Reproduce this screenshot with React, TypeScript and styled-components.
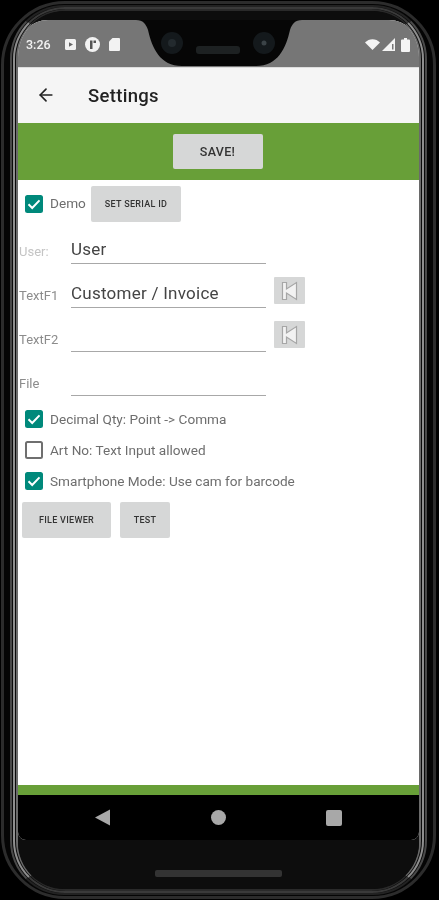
import styled, { createGlobalStyle } from "styled-components";
import { ArrowLeft } from "lucide-react";

const GlobalStyle = createGlobalStyle`
  html, body {
    margin: 0;
    padding: 0;
    height: 100%;
    overflow: hidden;
    background: #000;
    font-family: Roboto, "Liberation Sans", sans-serif;
  }
`;

const Page = styled.div`
  box-sizing: border-box;
  width: 439px;
  height: 900px;
  padding: 1px 3px 0 1px;
  background: #000;
  filter: blur(0.5px);
`;

const PhoneCase = styled.div`
  box-sizing: border-box;
  height: 898px;
  display: flex;
  padding: 1px 6px 1px;
  border: 3px solid #2c2c2c;
  border-radius: 64px;
  background: #050505;
`;

const Ring = styled.div<{ $shade: string; $dim: string; $gap?: number; $radius: number }>`
  box-sizing: border-box;
  flex: 1;
  min-width: 0;
  display: flex;
  padding: 0 ${(p) => p.$gap ?? 1}px;
  border: 2px solid ${(p) => p.$shade};
  border-top-color: ${(p) => p.$dim};
  border-bottom-color: ${(p) => p.$dim};
  border-radius: ${(p) => p.$radius}px;
  background: #0a0a0a;
`;

const Inner = styled.div`
  flex: 1;
  min-width: 0;
  display: flex;
  flex-direction: column;
  padding-top: 9px;
  border-radius: 46px;
  background: #0d0d0d;
  overflow: hidden;
`;

const Screen = styled.div`
  position: relative;
  display: flex;
  flex-direction: column;
  height: 820px;
  flex: none;
  background: #fff;
  border-radius: 30px 30px 8px 8px;
  overflow: hidden;
`;

const StatusBar = styled.div`
  height: 47px;
  flex: none;
  box-sizing: border-box;
  display: flex;
  align-items: center;
  padding: 2px 9px 0 8px;
  background: #767676;
  color: #f2f2f2;
`;

const Clock = styled.span`
  font-size: 12.5px;
  font-weight: 500;
  width: 39px;
`;

const StatusLeft = styled.div`
  display: flex;
  align-items: center;
  gap: 9px;
`;

const StatusRight = styled.div`
  display: flex;
  align-items: center;
  gap: 2px;
  margin-left: auto;
`;

const Notch = styled.svg`
  position: absolute;
  left: 112px;
  top: 0;
`;

const AppBar = styled.div`
  height: 55px;
  flex: none;
  box-sizing: border-box;
  display: flex;
  align-items: center;
  padding: 0 0 0 18px;
  border-top: 1px solid #ddd;
  background: #f5f5f5;
  color: #222;
`;

const Title = styled.h1`
  margin: 2px 0 0 32px;
  font-size: 18.5px;
  font-weight: 500;
  letter-spacing: 0.3px;
`;

const SaveBar = styled.div`
  height: 58px;
  flex: none;
  box-sizing: border-box;
  display: flex;
  justify-content: center;
  align-items: flex-start;
  padding: 11px 2px 0 0;
  background: #689f38;
  border-top: 1px solid #f5f5f5;
`;

const Button = styled.button<{ $w: number; $h?: number; $size?: number }>`
  box-sizing: border-box;
  width: ${(p) => p.$w}px;
  height: ${(p) => p.$h ?? 36}px;
  padding: 0;
  border: 0;
  border-radius: 2px;
  background: #d6d7d7;
  color: #333;
  font-family: inherit;
  font-size: ${(p) => p.$size ?? 9}px;
  font-weight: 500;
  letter-spacing: 0.3px;
  text-transform: uppercase;
`;

const Content = styled.div`
  flex: 1;
  display: flex;
  flex-direction: column;
  min-height: 0;
  padding-top: 6px;
`;

const DemoRow = styled.div`
  display: flex;
  align-items: center;
  height: 36px;
  padding-left: 7px;
`;

const CheckBox = styled.span<{ $on?: boolean }>`
  box-sizing: border-box;
  flex: none;
  width: 18px;
  height: 18px;
  display: flex;
  align-items: center;
  justify-content: center;
  border-radius: 2.5px;
  border: 2px solid ${(p) => (p.$on ? "#00897b" : "#6f6f6f")};
  background: ${(p) => (p.$on ? "#00897b" : "#fff")};
`;

const CheckLabel = styled.span`
  margin-left: 7px;
  font-size: 13.6px;
  color: #6e6e6e;
  white-space: nowrap;
`;

const DemoLabel = styled(CheckLabel)`
  width: 41px;
  flex: none;
  margin-top: -2px;
`;

const Fields = styled.div`
  display: flex;
  flex-direction: column;
  margin-top: -2px;
`;

const FieldRow = styled.div`
  display: flex;
  align-items: flex-end;
  height: 44px;
  padding-left: 1px;
`;

const FieldLabel = styled.span<{ $faint?: boolean }>`
  flex: none;
  width: 52px;
  padding-bottom: 5px;
  font-size: 13px;
  color: ${(p) => (p.$faint ? "#c4c4c4" : "#8c8c8c")};
`;

const FieldInput = styled.div`
  box-sizing: border-box;
  flex: none;
  width: 195px;
  height: 30px;
  padding-bottom: 4px;
  display: flex;
  align-items: flex-end;
  border-bottom: 1.5px solid #a8a8a8;
  font-size: 17px;
  letter-spacing: 0.25px;
  color: #444;
`;

const IconButton = styled.div`
  flex: none;
  width: 31px;
  height: 27px;
  margin: 0 0 4px 8px;
  display: flex;
  align-items: center;
  justify-content: center;
  background: #d6d7d7;
  border-radius: 1px;
`;

const Options = styled.div`
  display: flex;
  flex-direction: column;
  gap: 13px;
  padding: 14px 0 0 7px;
`;

const OptionRow = styled.div`
  display: flex;
  align-items: center;
  height: 18px;
`;

const BottomButtons = styled.div`
  display: flex;
  gap: 9px;
  padding: 12px 0 0 4px;
`;

const GreenStrip = styled.div`
  height: 10px;
  flex: none;
  background: #689f38;
`;

const NavBar = styled.div`
  height: 45px;
  flex: none;
  box-sizing: border-box;
  display: flex;
  align-items: center;
  justify-content: space-between;
  padding: 0 77px 0 77px;
  background: #000;
`;

const Chin = styled.div`
  flex: 1;
  display: flex;
  justify-content: center;
  padding-top: 30px;
`;

const Pill = styled.div`
  width: 127px;
  height: 7px;
  border-radius: 2px;
  background: #333;
`;

function Tick() {
  return (
    <svg width="14" height="14" viewBox="0 0 14 14">
      <path d="M1.5 7.3 5.2 11 12.5 3.4" fill="none" stroke="#fff" strokeWidth="2" />
    </svg>
  );
}

function SkipBack() {
  return (
    <svg width="18" height="20" viewBox="0 0 18 20">
      <path
        d="M1.5 1.5H5.5V8L15.5 1.5V18.5L5.5 12V18.5H1.5Z"
        fill="#f2f2f2"
        stroke="#a6a6a6"
        strokeWidth="1.2"
      />
    </svg>
  );
}

function Option({ on, label }: { on?: boolean; label: string }) {
  return (
    <OptionRow>
      <CheckBox $on={on}>{on && <Tick />}</CheckBox>
      <CheckLabel>{label}</CheckLabel>
    </OptionRow>
  );
}

export default function App() {
  return (
    <Page>
      <GlobalStyle />
      <PhoneCase>
        <Ring $shade="#4a4a4a" $dim="#222" $radius={54}>
          <Ring $shade="#8e8e8e" $dim="#3a3a3a" $radius={52}>
            <Ring $shade="#6a6a6a" $dim="#2a2a2a" $gap={0} $radius={50}>
              <Inner>
                <Screen>
                  <StatusBar>
                    <Clock>3:26</Clock>
                    <StatusLeft>
                      <svg width="11" height="11" viewBox="0 0 11 11">
                        <rect width="11" height="11" rx="1.5" fill="#f2f2f2" />
                        <path d="M4 3.2 8 5.5 4 7.8Z" fill="#666" />
                      </svg>
                      <svg width="15" height="15" viewBox="0 0 15 15">
                        <circle cx="7.5" cy="7.5" r="7.5" fill="#f2f2f2" />
                        <path d="M5 3.5H7.5V12H5ZM8.5 3.5H11V6H8.5Z" fill="#555" />
                      </svg>
                      <svg width="11" height="13" viewBox="0 0 11 13">
                        <path d="M3.5 0H10A1 1 0 0 1 11 1V12A1 1 0 0 1 10 13H1A1 1 0 0 1 0 12V3.5Z" fill="#f2f2f2" />
                      </svg>
                    </StatusLeft>
                    <StatusRight>
                      <svg width="15" height="11" viewBox="0 0 15 11">
                        <path d="M0 3.5C4 -1 11 -1 15 3.5L7.5 11Z" fill="#f4f4f4" />
                      </svg>
                      <svg width="13" height="13" viewBox="0 0 13 13">
                        <path d="M13 0V13H0Z" fill="#f4f4f4" />
                        <path d="M10 6H11.5V11.5H10Z" fill="#777" />
                      </svg>
                      <svg width="9" height="14" viewBox="0 0 9 14" style={{ marginLeft: 4 }}>
                        <path d="M3 0H6V1.5H8A1 1 0 0 1 9 2.5V13A1 1 0 0 1 8 14H1A1 1 0 0 1 0 13V2.5A1 1 0 0 1 1 1.5H3Z" fill="#f4f4f4" />
                      </svg>
                    </StatusRight>
                  </StatusBar>
                  <Notch width="178" height="47" viewBox="0 0 178 47">
                    <path
                      d="M0 0H6C13 0 16 4 18 10C22 28 30 46 52 46H126C148 46 156 28 160 10C162 4 165 0 172 0H178Z"
                      fill="#060606"
                    />
                    <circle cx="42" cy="23" r="11" fill="#14191c" />
                    <circle cx="42" cy="23" r="4" fill="#232a2e" />
                    <circle cx="134" cy="23" r="11" fill="#14191c" />
                    <circle cx="134" cy="23" r="2.5" fill="#3b4347" />
                    <rect x="66" y="26" width="44" height="8" rx="3" fill="#1d2122" />
                  </Notch>
                  <AppBar>
                    <ArrowLeft size={20} strokeWidth={2} />
                    <Title>Settings</Title>
                  </AppBar>
                  <SaveBar>
                    <Button $w={90} $h={35} $size={12.5}>
                      Save!
                    </Button>
                  </SaveBar>
                  <Content>
                    <DemoRow>
                      <CheckBox $on>
                        <Tick />
                      </CheckBox>
                      <DemoLabel>Demo</DemoLabel>
                      <Button $w={90}>Set Serial ID</Button>
                    </DemoRow>
                    <Fields>
                      <FieldRow>
                        <FieldLabel $faint>User:</FieldLabel>
                        <FieldInput>User</FieldInput>
                      </FieldRow>
                      <FieldRow>
                        <FieldLabel>TextF1</FieldLabel>
                        <FieldInput>Customer / Invoice</FieldInput>
                        <IconButton>
                          <SkipBack />
                        </IconButton>
                      </FieldRow>
                      <FieldRow>
                        <FieldLabel>TextF2</FieldLabel>
                        <FieldInput />
                        <IconButton>
                          <SkipBack />
                        </IconButton>
                      </FieldRow>
                      <FieldRow>
                        <FieldLabel>File</FieldLabel>
                        <FieldInput />
                      </FieldRow>
                    </Fields>
                    <Options>
                      <Option on label="Decimal Qty: Point -> Comma" />
                      <Option label="Art No: Text Input allowed" />
                      <Option on label="Smartphone Mode: Use cam for barcode" />
                    </Options>
                    <BottomButtons>
                      <Button $w={89}>File Viewer</Button>
                      <Button $w={50}>Test</Button>
                    </BottomButtons>
                  </Content>
                  <GreenStrip />
                  <NavBar>
                    <svg width="16" height="17" viewBox="0 0 16 17">
                      <path d="M0 8.5 15 0.5V16.5Z" fill="#a8a8a8" />
                    </svg>
                    <svg width="15" height="15" viewBox="0 0 15 15">
                      <circle cx="7.5" cy="7.5" r="7.5" fill="#a8a8a8" />
                    </svg>
                    <svg width="16" height="16" viewBox="0 0 16 16">
                      <rect width="16" height="16" rx="2" fill="#a8a8a8" />
                    </svg>
                  </NavBar>
                </Screen>
                <Chin>
                  <Pill />
                </Chin>
              </Inner>
            </Ring>
          </Ring>
        </Ring>
      </PhoneCase>
    </Page>
  );
}
